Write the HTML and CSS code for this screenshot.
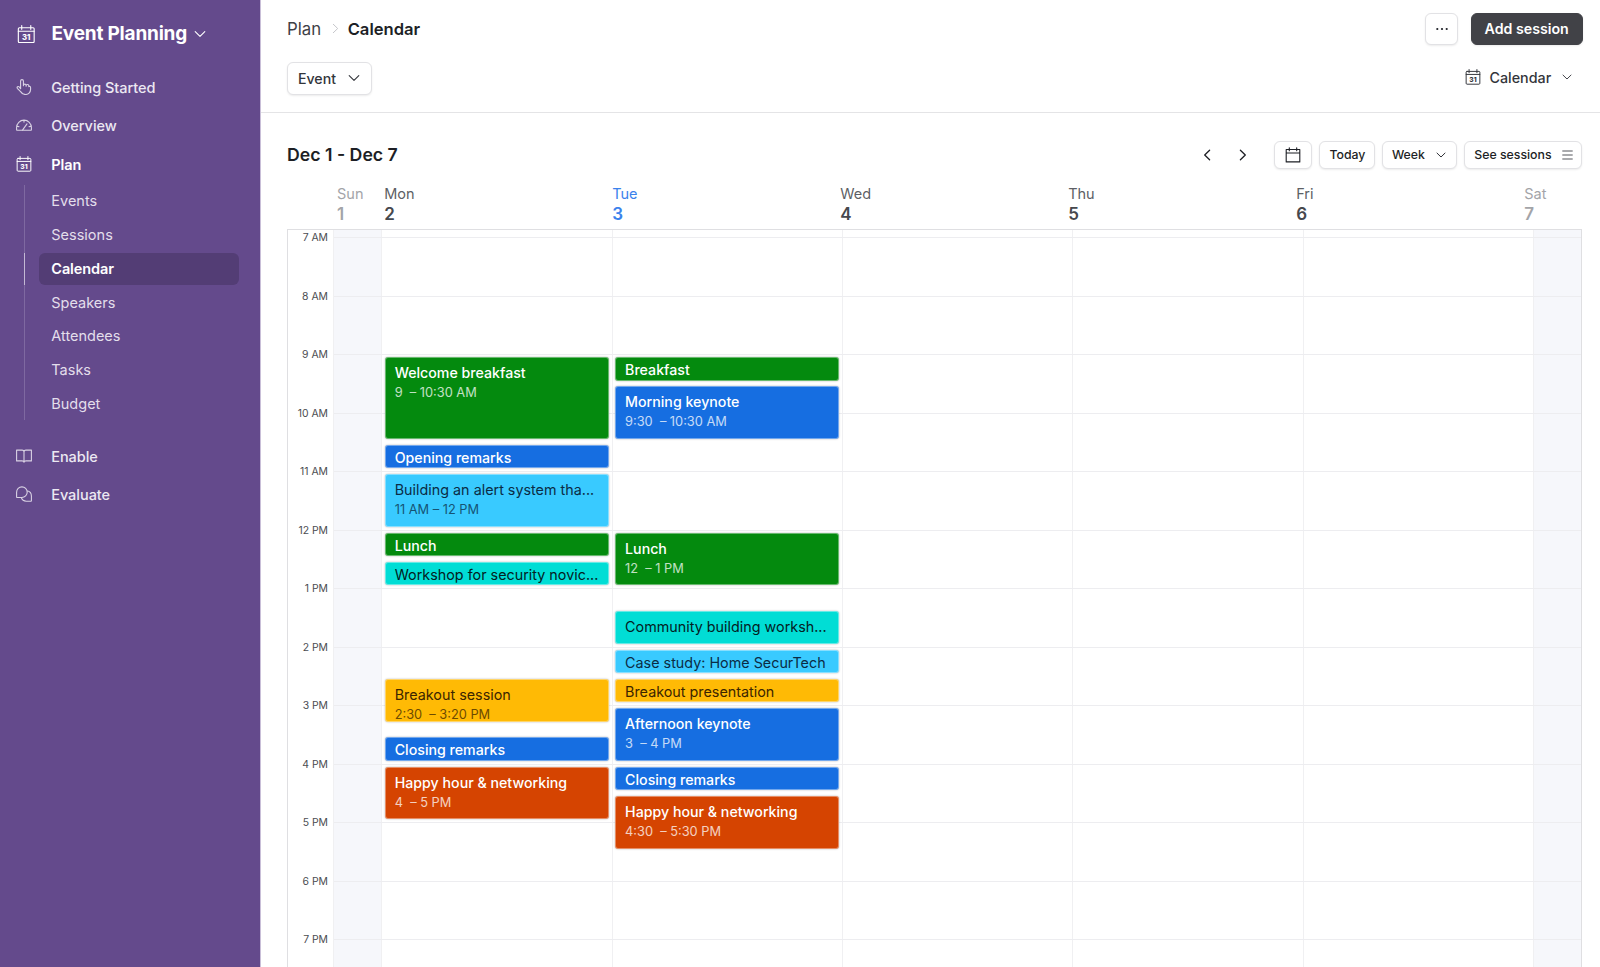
FILE: index.html
```html
<!DOCTYPE html>
<html lang="en">
<head>
    <meta charset="UTF-8">
    <meta name="viewport" content="width=device-width, initial-scale=1.0">
    <title>Event Planning - Calendar</title>
    <link rel="stylesheet" href="styles.css">
</head>
<body>
    <svg class="symbols" width="0" height="0">
        <symbol id="cal31" viewBox="0 0 18 18">
            <rect x="1.3" y="2.7" width="15.4" height="14.4" rx="1"/>
            <path d="M1.3 6.1h15.4M4.6.6v3.6M13.4.6v3.6"/>
            <text x="9" y="14.5" text-anchor="middle">31</text>
        </symbol>
        <symbol id="down" viewBox="0 0 12 12">
            <path d="M1.2 3.7 6 8.4l4.8-4.7"/>
        </symbol>
    </svg>
    <div class="app">
        <nav class="sidebar">
            <div class="brand">
                <svg class="icon icon-brand"><use href="#cal31"/></svg>
                <h1>Event Planning</h1>
                <svg class="chevron"><use href="#down"/></svg>
            </div>
            <a class="nav-item">
                <svg class="icon" viewBox="0 0 16 16"><path d="M4.600 9.700V2a1.400 1.400 0 0 1 2.800 0v4.800M7.400 6.500a1.350 1.350 0 0 1 2.700 0v.7M10.100 6.800a1.350 1.350 0 0 1 2.700.2v.6M12.800 7.500c.9-.4 1.800.2 1.800 1.200v1.600c0 3-2.300 5.200-5.100 5.200-2.300 0-3.800-1.100-4.900-2.900L1.300 9.300C.6 8.100 2.200 6.900 3.200 7.900l1.400 1.800"/></svg>
                Getting Started
            </a>
            <a class="nav-item">
                <svg class="icon" viewBox="0 0 16 16"><path d="M.6 12.700v-2.200a7.400 7.400 0 0 1 14.800 0v2.200a.6.6 0 0 1-.6.600H1.200a.6.6 0 0 1-.6-.600zM6.300 13.300l4.700-6.400M8 3v2.100M.9 9.100l2.100.6M15.100 9.100l-2.100.6"/></svg>
                Overview
            </a>
            <a class="nav-item current">
                <svg class="icon"><use href="#cal31"/></svg>
                Plan
            </a>
            <div class="sub-nav">
                <a class="sub-item">Events</a>
                <a class="sub-item">Sessions</a>
                <a class="sub-item active"><span>Calendar</span></a>
                <a class="sub-item">Speakers</a>
                <a class="sub-item">Attendees</a>
                <a class="sub-item">Tasks</a>
                <a class="sub-item">Budget</a>
            </div>
            <a class="nav-item">
                <svg class="icon" viewBox="0 0 16 16"><path d="M8 4v10.300M8 4c0-1 .8-1.900 1.900-1.900h5.500v10.800H10c-1.200 0-2 .5-2 1.400 0-.9-.8-1.400-2-1.400H.6V2.100h5.500C7.200 2.100 8 3 8 4z"/></svg>
                Enable
            </a>
            <a class="nav-item">
                <svg class="icon" viewBox="0 0 16 16"><path d="M.6 10.900V6.200a5.300 5.300 0 1 1 5.300 5.300H1.200a.6.6 0 0 1-.6-.6zM5.300 11.500a5.300 5.300 0 0 0 5 3.700h4.500a.6.6 0 0 0 .6-.6V9.900a5.300 5.300 0 0 0-4.400-5.100"/></svg>
                Evaluate
            </a>
        </nav>

        <main class="main">
            <header class="header">
                <div class="row">
                    <div class="breadcrumb">
                        <span>Plan</span>
                        <svg class="separator" viewBox="0 0 8 12"><path d="m1.500 1.200 5 4.800-5 4.800"/></svg>
                        <h2>Calendar</h2>
                    </div>
                    <div class="actions">
                        <button class="btn btn-more"><svg width="12" height="4" viewBox="0 0 12 4"><circle cx="1.300" cy="2" r="1.100"/><circle cx="6" cy="2" r="1.100"/><circle cx="10.700" cy="2" r="1.100"/></svg></button>
                        <button class="btn btn-primary">Add session</button>
                    </div>
                </div>
                <div class="row">
                    <button class="btn btn-filter">Event <svg class="chevron"><use href="#down"/></svg></button>
                    <div class="view-switch">
                        <svg class="icon"><use href="#cal31"/></svg>
                        Calendar
                        <svg class="chevron"><use href="#down"/></svg>
                    </div>
                </div>
            </header>

            <div class="toolbar">
                <h3>Dec 1 - Dec 7</h3>
                <div class="pager">
                    <svg viewBox="0 0 8 12"><path d="M6.600 1.200 1.700 6l4.900 4.800"/></svg>
                    <svg viewBox="0 0 8 12"><path d="M1.400 1.200 6.300 6l-4.900 4.800"/></svg>
                </div>
                <button class="btn btn-small btn-date"><svg class="icon" viewBox="0 0 16 16"><path d="M1.200 2.500h13.600v12.400H1.200zM1.200 6h13.600M4.300.7v3M11.700.7v3"/></svg></button>
                <button class="btn btn-small btn-today">Today</button>
                <button class="btn btn-small btn-week">Week <svg class="chevron"><use href="#down"/></svg></button>
                <button class="btn btn-small btn-sessions">See sessions <svg class="lines" viewBox="0 0 11 10"><path d="M.3 1h10.400M.3 5h10.400M.3 9h10.400"/></svg></button>
            </div>

            <div class="days">
                <div class="day weekend">Sun<b>1</b></div>
                <div class="day">Mon<b>2</b></div>
                <div class="day today">Tue<b>3</b></div>
                <div class="day">Wed<b>4</b></div>
                <div class="day">Thu<b>5</b></div>
                <div class="day">Fri<b>6</b></div>
                <div class="day weekend">Sat<b>7</b></div>
            </div>

            <!-- one grid row per 5 minutes, row 2 is 7 AM -->
            <div class="grid">
                <div class="column hours"></div>
                <div class="column off"></div>
                <div class="column"></div>
                <div class="column"></div>
                <div class="column"></div>
                <div class="column"></div>
                <div class="column"></div>
                <div class="column off"></div>

                <div class="hour" style="grid-row: 2">7 AM</div>
                <div class="hour" style="grid-row: 14">8 AM</div>
                <div class="hour" style="grid-row: 26">9 AM</div>
                <div class="hour" style="grid-row: 38">10 AM</div>
                <div class="hour" style="grid-row: 50">11 AM</div>
                <div class="hour" style="grid-row: 62">12 PM</div>
                <div class="hour" style="grid-row: 74">1 PM</div>
                <div class="hour" style="grid-row: 86">2 PM</div>
                <div class="hour" style="grid-row: 98">3 PM</div>
                <div class="hour" style="grid-row: 110">4 PM</div>
                <div class="hour" style="grid-row: 122">5 PM</div>
                <div class="hour" style="grid-row: 134">6 PM</div>
                <div class="hour" style="grid-row: 146">7 PM</div>

                <div class="line" style="grid-row: 2"></div>
                <div class="line" style="grid-row: 14"></div>
                <div class="line" style="grid-row: 26"></div>
                <div class="line" style="grid-row: 38"></div>
                <div class="line" style="grid-row: 50"></div>
                <div class="line" style="grid-row: 62"></div>
                <div class="line" style="grid-row: 74"></div>
                <div class="line" style="grid-row: 86"></div>
                <div class="line" style="grid-row: 98"></div>
                <div class="line" style="grid-row: 110"></div>
                <div class="line" style="grid-row: 122"></div>
                <div class="line" style="grid-row: 134"></div>
                <div class="line" style="grid-row: 146"></div>

                <div class="event mon green" style="grid-row: 26 / 44">Welcome breakfast<small>9 &nbsp;– 10:30 AM</small></div>
                <div class="event mon blue short" style="grid-row: 44 / 50">Opening remarks</div>
                <div class="event mon cyan" style="grid-row: 50 / 62">Building an alert system tha...<small>11 AM – 12 PM</small></div>
                <div class="event mon green short" style="grid-row: 62 / 68">Lunch</div>
                <div class="event mon teal short" style="grid-row: 68 / 74">Workshop for security novic...</div>
                <div class="event mon yellow" style="grid-row: 92 / 102">Breakout session<small>2:30 &nbsp;– 3:20 PM</small></div>
                <div class="event mon blue short" style="grid-row: 104 / 110">Closing remarks</div>
                <div class="event mon red" style="grid-row: 110 / 122">Happy hour &amp; networking<small>4 &nbsp;– 5 PM</small></div>

                <div class="event tue green short" style="grid-row: 26 / 32">Breakfast</div>
                <div class="event tue blue" style="grid-row: 32 / 44">Morning keynote<small>9:30 &nbsp;– 10:30 AM</small></div>
                <div class="event tue green" style="grid-row: 62 / 74">Lunch<small>12 &nbsp;– 1 PM</small></div>
                <div class="event tue teal" style="grid-row: 78 / 86">Community building worksh...</div>
                <div class="event tue cyan short" style="grid-row: 86 / 92">Case study: Home SecurTech</div>
                <div class="event tue yellow short" style="grid-row: 92 / 98">Breakout presentation</div>
                <div class="event tue blue" style="grid-row: 98 / 110">Afternoon keynote<small>3 &nbsp;– 4 PM</small></div>
                <div class="event tue blue short" style="grid-row: 110 / 116">Closing remarks</div>
                <div class="event tue red" style="grid-row: 116 / 128">Happy hour &amp; networking<small>4:30 &nbsp;– 5:30 PM</small></div>
            </div>
        </main>
    </div>
</body>
</html>
```
FILE: styles.css
```css
* {
    box-sizing: border-box;
}

body {
    margin: 0;
    font-family: Inter, "Liberation Sans", sans-serif;
    font-size: 14.5px;
    color: #1d1f25;
    background: #fff;
}

h1, h2, h3 {
    margin: 0;
}

svg {
    fill: none;
    stroke: currentColor;
    stroke-width: 1.1;
    stroke-linejoin: round;
    stroke-linecap: round;
    flex-shrink: 0;
}

svg text {
    fill: currentColor;
    stroke: none;
    font-size: 7.5px;
    font-weight: 800;
}

.symbols {
    display: none;
}

.icon {
    width: 16px;
    height: 16px;
}

.chevron {
    width: 12px;
    height: 12px;
}

.app {
    display: flex;
    height: 967px;
    overflow: hidden;
}

/* Sidebar */
.sidebar {
    width: 261px;
    flex-shrink: 0;
    background: #644a8c;
    border-right: 1px solid #c9bfd8;
    color: #fff;
}

.brand {
    display: flex;
    align-items: center;
    height: 68.7px;
    padding: 0 0 1px 17px;
}

.brand h1 {
    margin: 0 7px 0 16px;
    font-size: 19px;
    font-weight: 700;
    letter-spacing: -0.2px;
}

.icon-brand {
    width: 18.5px;
    height: 18.5px;
}

.nav-item {
    display: flex;
    align-items: center;
    gap: 19px;
    height: 38.2px;
    padding-left: 16.2px;
    color: #ece8f2;
    font-weight: 500;
    letter-spacing: -0.03px;
}

.nav-item .icon {
    margin-top: -1px;
    color: #d9d2e4;
}

.nav-item.current,
.nav-item.current .icon {
    color: #fff;
    font-weight: 600;
}

.sub-nav {
    display: flex;
    flex-direction: column;
    gap: 1.75px;
    margin: 2px 21px 17.8px 24px;
    border-left: 1px solid #7f69a1;
}

.sub-item {
    height: 32px;
    padding-left: 26.3px;
    line-height: 32px;
    color: #e3deeb;
}

.sub-item.active {
    margin-left: -1px;
    padding-left: 14px;
    border-left: 1px solid #c4b9d4;
    color: #fff;
    font-weight: 600;
    letter-spacing: -0.1px;
}

.sub-item.active span {
    display: block;
    padding-left: 12.3px;
    border-radius: 6px;
    background: #533d75;
}

/* Header */
.main {
    flex: 1;
    min-width: 0;
}

.header {
    display: flex;
    flex-direction: column;
    gap: 17px;
    height: 113px;
    padding: 12.5px 17.3px 0 25.5px;
    border-bottom: 1px solid #e4e4e6;
}

.row {
    display: flex;
    align-items: center;
    justify-content: space-between;
    height: 32.5px;
}

.breadcrumb {
    display: flex;
    align-items: center;
    padding-left: 0.5px;
    font-size: 16.8px;
    color: #3f4147;
}

.breadcrumb h2 {
    font-size: 16.6px;
    font-weight: 600;
    color: #1d1f25;
}

.separator {
    width: 7px;
    height: 11px;
    margin: 0 9px 0 10.5px;
    color: #c3c4c8;
}

.actions {
    display: flex;
    gap: 12.5px;
}

.btn {
    display: flex;
    align-items: center;
    justify-content: center;
    height: 32.5px;
    padding: 0;
    border: 1px solid #e2e2e5;
    border-radius: 6px;
    background: #fff;
    box-shadow: 0 1px 2px rgba(0, 0, 0, 0.08);
    font-family: inherit;
    font-size: 14.5px;
    font-weight: 500;
    color: #1d1f25;
}

.btn-more {
    width: 33px;
}

.btn-more circle {
    fill: currentColor;
    stroke: none;
}

.btn-primary {
    width: 112px;
    border-color: #414247;
    background: #414247;
    color: #fff;
    font-weight: 600;
    font-size: 14.2px;
}

.btn-filter {
    width: 85px;
    gap: 12px;
    font-size: 14.2px;
    color: #33353b;
}

.view-switch {
    display: flex;
    align-items: center;
    padding: 0 11px 2px 0;
    font-size: 14.3px;
    font-weight: 500;
    color: #33353b;
}

.view-switch .icon {
    margin-right: 9px;
}

.view-switch .chevron {
    width: 10px;
    height: 10px;
    margin-left: 10.5px;
}

/* Toolbar */
.toolbar {
    display: flex;
    align-items: center;
    gap: 7px;
    padding: 27.5px 17.6px 0 26px;
}

.toolbar h3 {
    font-size: 17.7px;
    font-weight: 600;
    margin-right: auto;
}

.pager {
    display: flex;
    gap: 28px;
    margin-right: 20px;
}

.pager svg {
    width: 8px;
    height: 12px;
    stroke-width: 1.3;
}

.btn-small {
    height: 28px;
    font-size: 12.3px;
}

.btn-date {
    width: 38px;
}

.btn-today {
    width: 56px;
}

.btn-week {
    width: 75px;
    gap: 11px;
    padding-right: 2px;
}

.btn-week .chevron {
    width: 10px;
    height: 10px;
}

.btn-sessions {
    width: 118px;
    gap: 10px;
}

.lines {
    width: 11px;
    height: 10px;
    color: #55575d;
    stroke-linecap: butt;
}

/* Calendar */
.days {
    display: grid;
    grid-template-columns: 47.2px repeat(5, 228px) 60px;
    padding: 15.2px 0 5px 76px;
    line-height: 20px;
}

.day {
    font-size: 14.5px;
    color: #5d5f65;
}

.day b {
    display: block;
    font-size: 17px;
    font-weight: 600;
    color: #46484d;
}

.weekend,
.weekend b {
    color: #a3a4a8;
}

.today,
.today b {
    color: #3a82ec;
}

.grid {
    display: grid;
    grid-template-columns: 46.3px 48px repeat(5, 230.4px) 46.7px;
    grid-template-rows: 7.6px repeat(160, 4.875px);
    margin: 0 18px 0 26px;
    border: 1px solid #dfdfe2;
}

.column {
    grid-row: 1 / -1;
    border-right: 1px solid #f0f0f2;
}

.column:nth-child(1) { grid-column: 1; }
.column:nth-child(2) { grid-column: 2; }
.column:nth-child(3) { grid-column: 3; }
.column:nth-child(4) { grid-column: 4; }
.column:nth-child(5) { grid-column: 5; }
.column:nth-child(6) { grid-column: 6; }
.column:nth-child(7) { grid-column: 7; }
.column:nth-child(8) { grid-column: 8; border-right: none; }

.column.off {
    background: #f6f7fb;
}

.hour {
    grid-column: 1;
    height: 14px;
    margin-top: -6px;
    padding-right: 6.3px;
    font-size: 10.4px;
    line-height: 14px;
    text-align: right;
    white-space: nowrap;
    color: #4b4d52;
}

.line {
    grid-column: 2 / -1;
    border-top: 1px solid #ededf0;
}

.event {
    margin: 2.8px 3.8px 2.8px 2.4px;
    padding: 5px 0 0 9px;
    overflow: hidden;
    border: 1px solid rgba(255, 255, 255, 0.4);
    border-radius: 3px;
    box-shadow: 0 0 2px rgba(0, 0, 0, 0.3);
    font-size: 14.2px;
    line-height: 19px;
    white-space: nowrap;
    color: #fff;
    font-weight: 500;
}

.event small {
    display: block;
    margin-top: 1px;
    font-size: 12.8px;
    font-weight: 400;
    opacity: 0.75;
}

.event.short {
    padding-top: 2px;
}

.mon { grid-column: 3; }
.tue { grid-column: 4; }

.green { background: #048a0e; }
.blue { background: #166ee1; }
.red { background: #d54401; }

.cyan,
.teal,
.yellow {
    font-size: 14.35px;
    font-weight: 400;
}

.cyan {
    background: #39caff;
    color: #0b2c45;
}

.teal {
    background: #01ddd5;
    color: #04211f;
}

.yellow {
    background: #ffba05;
    color: #3b2501;
}
```
